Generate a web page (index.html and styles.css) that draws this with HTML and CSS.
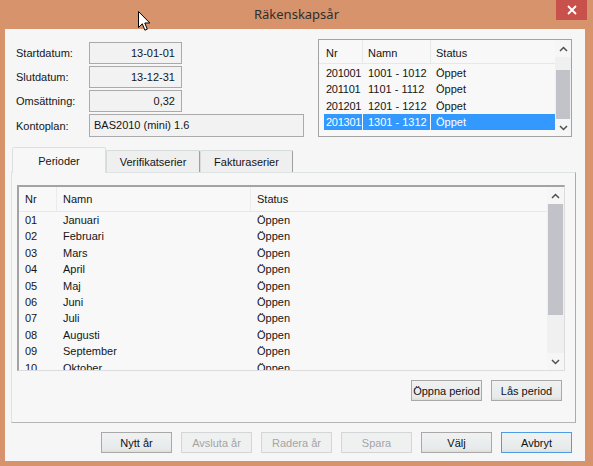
FILE: index.html
```html
<!DOCTYPE html>
<html lang="sv">
<head>
<meta charset="utf-8">
<title>Räkenskapsår</title>
<link rel="stylesheet" href="styles.css">
</head>
<body>
<div class="window">
  <div class="titlebar">
    <div class="title">Räkenskapsår</div>
    <div class="close">
      <svg width="10" height="10" viewBox="0 0 10 10"><path d="M1 1 L9 9 M9 1 L1 9" stroke="#fff" stroke-width="1.8" fill="none"/></svg>
    </div>
  </div>
  <div class="client">
    <div class="top">
      <div class="form">
        <div class="frow"><span class="lbl">Startdatum:</span><div class="field num">13-01-01</div></div>
        <div class="frow"><span class="lbl">Slutdatum:</span><div class="field num">13-12-31</div></div>
        <div class="frow"><span class="lbl">Omsättning:</span><div class="field num">0,32</div></div>
        <div class="frow tall"><span class="lbl">Kontoplan:</span><div class="field wide">BAS2010 (mini) 1.6</div></div>
      </div>
      <div class="ylist">
        <div class="ylv">
          <div class="yhead">
            <div class="yh1">Nr</div><div class="yh2">Namn</div><div class="yh3">Status</div>
          </div>
          <div class="yrows">
            <div class="yrow"><div class="yc1">201001</div><div class="yc2">1001 - 1012</div><div class="yc3">Öppet</div></div>
            <div class="yrow"><div class="yc1">201101</div><div class="yc2">1101 - 1112</div><div class="yc3">Öppet</div></div>
            <div class="yrow"><div class="yc1">201201</div><div class="yc2">1201 - 1212</div><div class="yc3">Öppet</div></div>
            <div class="yrow sel"><div class="yc1">201301</div><div class="yc2">1301 - 1312</div><div class="yc3">Öppet</div></div>
          </div>
        </div>
        <div class="sb ysb">
          <div class="arr"><svg width="9" height="6" viewBox="0 0 9 6"><polyline points="1,5 4.5,1.5 8,5" fill="none" stroke="#505050" stroke-width="1.5"/></svg></div>
          <div class="track end"><div class="thumb ythumb"></div></div>
          <div class="arr"><svg width="9" height="6" viewBox="0 0 9 6"><polyline points="1,1 4.5,4.5 8,1" fill="none" stroke="#505050" stroke-width="1.5"/></svg></div>
        </div>
      </div>
    </div>

    <div class="tabs">
      <div class="tab sel">Perioder</div>
      <div class="tab">Verifikatserier</div>
      <div class="tab t3">Fakturaserier</div>
    </div>
    <div class="panel">
      <div class="plist">
        <div class="plv">
          <div class="phead">
            <div class="pc1">Nr</div><div class="pc2">Namn</div><div class="pc3">Status</div>
          </div>
          <div class="prows">
            <div class="prow"><div class="pc1">01</div><div class="pc2">Januari</div><div class="pc3">Öppen</div></div>
            <div class="prow"><div class="pc1">02</div><div class="pc2">Februari</div><div class="pc3">Öppen</div></div>
            <div class="prow"><div class="pc1">03</div><div class="pc2">Mars</div><div class="pc3">Öppen</div></div>
            <div class="prow"><div class="pc1">04</div><div class="pc2">April</div><div class="pc3">Öppen</div></div>
            <div class="prow"><div class="pc1">05</div><div class="pc2">Maj</div><div class="pc3">Öppen</div></div>
            <div class="prow"><div class="pc1">06</div><div class="pc2">Juni</div><div class="pc3">Öppen</div></div>
            <div class="prow"><div class="pc1">07</div><div class="pc2">Juli</div><div class="pc3">Öppen</div></div>
            <div class="prow"><div class="pc1">08</div><div class="pc2">Augusti</div><div class="pc3">Öppen</div></div>
            <div class="prow"><div class="pc1">09</div><div class="pc2">September</div><div class="pc3">Öppen</div></div>
            <div class="prow"><div class="pc1">10</div><div class="pc2">Oktober</div><div class="pc3">Öppen</div></div>
          </div>
        </div>
        <div class="sb psb">
          <div class="arr"><svg width="9" height="6" viewBox="0 0 9 6"><polyline points="1,5 4.5,1.5 8,5" fill="none" stroke="#505050" stroke-width="1.5"/></svg></div>
          <div class="track"><div class="thumb pthumb"></div></div>
          <div class="arr"><svg width="9" height="6" viewBox="0 0 9 6"><polyline points="1,1 4.5,4.5 8,1" fill="none" stroke="#505050" stroke-width="1.5"/></svg></div>
        </div>
      </div>
      <div class="pbtns">
        <button class="btn">Öppna period</button>
        <button class="btn">Lås period</button>
      </div>
    </div>

    <div class="btnrow">
      <button class="btn">Nytt år</button>
      <button class="btn dis">Avsluta år</button>
      <button class="btn dis">Radera år</button>
      <button class="btn dis">Spara</button>
      <button class="btn">Välj</button>
      <button class="btn def">Avbryt</button>
    </div>
  </div>
  <svg class="cursor" width="13" height="21" viewBox="0 0 13 21"><path d="M0.5 0.5 L0.5 16.5 L4.3 12.8 L6.9 19.2 L9.3 18.2 L6.8 12 L11.8 12 Z" fill="#fff" stroke="#000" stroke-width="1" stroke-linejoin="miter"/></svg>
</div>
</body>
</html>
```
FILE: styles.css
```css
* { box-sizing: border-box; }
html, body { margin: 0; padding: 0; }
body {
  width: 593px;
  height: 466px;
  overflow: hidden;
  font-family: "Liberation Sans", Arial, sans-serif;
  font-size: 11px;
  color: #151515;
}
.window {
  position: relative;
  width: 593px;
  height: 466px;
  background: #d7936b;
  display: flex;
  flex-direction: column;
}
.titlebar {
  height: 29px;
  display: grid;
  grid-template-columns: 1fr auto 1fr;
}
.title {
  grid-column: 2;
  font-family: "Noto Sans", sans-serif;
  font-size: 13px;
  color: #2e2e2e;
  line-height: 28px;
}
.close {
  grid-column: 3;
  justify-self: end;
  width: 31px;
  height: 20px;
  margin-right: 6px;
  background: #c9514b;
  display: flex;
  align-items: center;
  justify-content: center;
}
.client {
  margin: 0 8px 0 5px;
  height: 432px;
  background: #f6f6f6;
  display: flex;
  flex-direction: column;
}

/* top section */
.top {
  display: flex;
  height: 108px;
  padding: 0 13px 0 11px;
}
.form { width: 288px; margin-top: 13px; }
.frow {
  display: flex;
  align-items: center;
  height: 22px;
  margin-bottom: 2px;
}
.frow.tall { height: 23px; }
.lbl { width: 73px; }
.field {
  height: 22px;
  width: 93px;
  border: 1px solid #aaaaaa;
  background: #f2f2f2;
  line-height: 20px;
  padding: 0 6px 0 4px;
}
.field.num { text-align: right; }
.field.wide { width: 215px; height: 23px; line-height: 21px; }

.ylist {
  margin-left: auto;
  margin-top: 10px;
  width: 254px;
  height: 98px;
  border: 1px solid #a3a3a3;
  background: #f8f8f8;
  display: flex;
}
.ylv { flex: 1; }
.yhead {
  display: flex;
  height: 24px;
  line-height: 23px;
  padding-top: 2px;
  border-bottom: 1px solid #e4e8e8;
}
.yh1 { width: 44px; padding-left: 7px; border-right: 1px solid #e4e8e8; margin-top: -2px; padding-top: 2px; }
.yh2 { width: 68px; padding-left: 5px; border-right: 1px solid #e4e8e8; margin-top: -2px; padding-top: 2px; }
.yh3 { flex: 1; padding-left: 5px; }
.yrows { padding-top: 1px; }
.yrow {
  display: flex;
  height: 16.33px;
  line-height: 16px;
  padding-left: 5px;
}
.yc1 { width: 38px; padding-left: 2px; margin-right: 1px; letter-spacing: -0.25px; white-space: nowrap; }
.yc2 { width: 67px; padding-left: 5px; margin-right: 1px; }
.yc3 { flex: 1; padding-left: 5px; }
.yrow.sel { color: #ffffff; }
.yrow.sel > div { background: #3399ff; }

/* scrollbars */
.sb {
  display: flex;
  flex-direction: column;
  background: #f0f0f0;
}
.ysb { width: 16px; }
.psb { width: 17px; }
.arr {
  height: 17px;
  display: flex;
  align-items: center;
  justify-content: center;
  background: #f6f6f6;
}
.track {
  flex: 1;
  display: flex;
  flex-direction: column;
}
.track.end { justify-content: flex-end; }
.thumb {
  background: #c2c3c9;
  margin: 0 1px;
}
.ythumb { height: 49px; }
.pthumb { height: 111px; }

/* tabs */
.tabs {
  display: flex;
  align-items: flex-end;
  height: 25px;
  margin-top: 10px;
  padding-left: 7px;
}
.tab {
  width: 94px;
  height: 22px;
  display: flex;
  align-items: center;
  justify-content: center;
  background: #efefef;
  border: 1px solid #d6dbdb;
  border-right-color: #9f9f9f;
  border-bottom: none;
  border-radius: 2px 2px 0 0;
}
.tab.t3 { width: 93px; }
.tab.sel {
  height: 26px;
  margin-bottom: -1px;
  background: #f7f7f7;
  border-color: #dadfdf;
  position: relative;
  z-index: 1;
}
.panel {
  margin-left: 6px;
  width: 565px;
  height: 251px;
  border: 1px solid #dde2e2;
  border-right-color: #ababab;
  border-bottom-color: #b5b5b5;
  background: #f7f7f7;
  padding: 12px 10px 21px 5px;
}
.plist {
  height: 186px;
  border-style: solid;
  border-width: 2px 1px 1px 2px;
  border-color: #a3a3a3 #dcdcdc #dcdcdc #a3a3a3;
  background: #f8f8f8;
  display: flex;
  overflow: hidden;
}
.plv { flex: 1; overflow: hidden; }
.phead {
  display: flex;
  height: 25px;
  line-height: 24px;
  border-bottom: 1px solid #e4e8e8;
}
.phead .pc1, .phead .pc2 { border-right: 1px solid #e8ecec; }
.pc1 { width: 38px; padding-left: 6px; }
.pc2 { width: 194px; padding-left: 6px; }
.pc3 { flex: 1; padding-left: 6px; }
.prow {
  display: flex;
  height: 16.4px;
  line-height: 16px;
}
.pbtns {
  display: flex;
  justify-content: flex-end;
  gap: 9px;
  margin-top: 9px;
  padding-right: 3px;
}

/* buttons */
.btn {
  width: 71px;
  height: 21px;
  padding: 0;
  font-family: "Liberation Sans", Arial, sans-serif;
  font-size: 11px;
  color: #111;
  border: 1px solid #a9a9a9;
  background: linear-gradient(#f0f2f2, #e7eaea 85%, #e2ddd4);
  border-radius: 0;
}
.btn.dis {
  color: #a4a4a4;
  border-color: #d2d6d6;
  background: #eff1f1;
}
.btn.def { border-color: #4e9de4; }
.btnrow {
  display: flex;
  justify-content: flex-end;
  gap: 9px;
  margin-top: 9px;
  padding-right: 13px;
}

.cursor {
  position: absolute;
  left: 138px;
  top: 11px;
}
```
